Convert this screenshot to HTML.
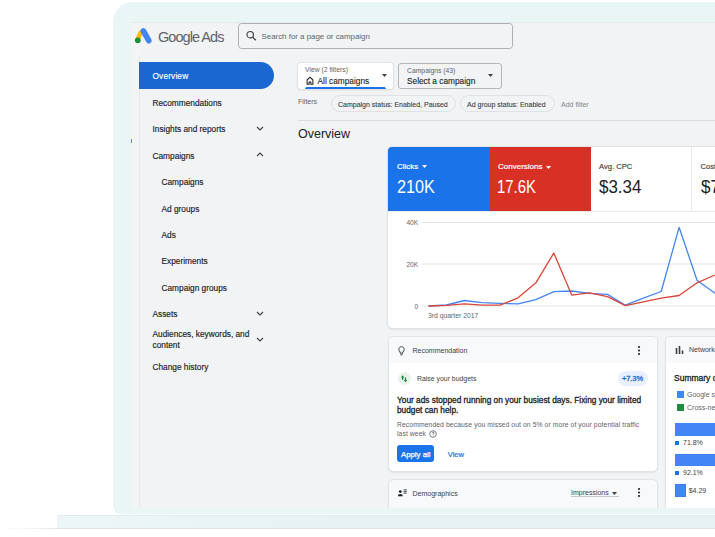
<!DOCTYPE html>
<html><head><meta charset="utf-8">
<style>
*{margin:0;padding:0;box-sizing:border-box}
html,body{width:715px;height:537px;overflow:hidden;background:#fff;font-family:"Liberation Sans",sans-serif;color:#202124}
.a{position:absolute;white-space:nowrap}
#frame{position:absolute;left:112.5px;top:2px;width:640px;height:512px;background:#eaf5f6;border-radius:20px 0 0 8px}
#base{position:absolute;left:57px;top:514.5px;width:700px;height:14.5px;background:linear-gradient(90deg,#ecf6f7,#e6f2f3 40%);border-bottom:1.5px solid #dfe3e8;border-top:1px solid #e0ecee;border-radius:1px 0 0 1px}
#shadow{position:absolute;left:0;top:527.5px;width:60px;height:1.5px;background:linear-gradient(90deg,rgba(223,227,232,0),#e3e6ea)}
#screen{position:absolute;left:131px;top:22px;width:600px;height:486px;background:#f1f3f4;overflow:hidden}
.nav{position:absolute;margin-top:0.5px;left:21.5px;font-size:8.3px;color:#202124;line-height:10px;-webkit-text-stroke:0.15px currentColor}
.chev{position:absolute;width:8px;height:5px}
.card{position:absolute;background:#fff;border-radius:4.5px;box-shadow:0 0 0 1px #e1e3e6,0 1px 2px rgba(60,64,67,.24)}
</style></head><body>
<div id="frame"></div>
<div id="base"></div><div id="shadow"></div>
<div id="screen">
  <div style="position:absolute;left:0;top:0;width:8px;height:486px;background:#f3f4f6"></div>
  <div style="position:absolute;left:0;top:0;width:600px;height:1px;background:#e6e8ea"></div>
  <div style="position:absolute;left:0;top:117px;width:1px;height:3.5px;background:#5b8ee8"></div>
  <div style="position:absolute;left:7.5px;top:34px;width:1.5px;height:452px;background:#e7e8eb"></div>
  <!-- logo -->
  <svg class="a" style="left:0;top:0" width="30" height="30" viewBox="0 0 30 30">
    <path d="M9.9 10.6 L6.8 16.8" stroke="#fbbc04" stroke-width="4.6" stroke-linecap="round"/>
    <path d="M12.4 9 L17.8 18.7" stroke="#4285f4" stroke-width="5.7" stroke-linecap="round"/>
    <circle cx="6.8" cy="18.3" r="2.9" fill="#1e8e3e"/>
  </svg>
  <div class="a" style="left:27px;top:6.5px;font-size:14.5px;letter-spacing:-0.95px;color:#5f6368">Google Ads</div>
  <!-- search -->
  <div class="a" style="left:107px;top:0.8px;width:274.5px;height:26.4px;border:1.3px solid #acafb3;border-radius:3.5px;background:#f1f3f4"></div>
  <svg class="a" style="left:115px;top:8px" width="11" height="11" viewBox="0 0 11 11"><circle cx="4.2" cy="4.7" r="3.2" fill="none" stroke="#3c4043" stroke-width="1.15"/><path d="M6.6 7.1 L9.8 10.3" stroke="#3c4043" stroke-width="1.3"/></svg>
  <div class="a" style="left:130.5px;top:9.5px;font-size:7.9px;color:#5f6368">Search for a page or campaign</div>

  <!-- sidebar -->
  <div class="a" style="left:8px;top:40px;width:135px;height:27px;background:#1a67d2;border-radius:0 14px 14px 0"></div>
  <div class="nav" style="top:48.2px;color:#fff;letter-spacing:0.15px">Overview</div>
  <div class="nav" style="top:75px">Recommendations</div>
  <div class="nav" style="top:101px">Insights and reports</div>
  <div class="nav" style="top:128px">Campaigns</div>
  <div class="nav" style="top:154px;left:30.5px">Campaigns</div>
  <div class="nav" style="top:181px;left:30.5px">Ad groups</div>
  <div class="nav" style="top:207px;left:30.5px">Ads</div>
  <div class="nav" style="top:233px;left:30.5px">Experiments</div>
  <div class="nav" style="top:260px;left:30.5px">Campaign groups</div>
  <div class="nav" style="top:286.5px">Assets</div>
  <div class="nav" style="top:306.6px;line-height:10.8px">Audiences, keywords, and<br>content</div>
  <div class="nav" style="top:339px">Change history</div>
  <svg class="chev" style="left:125.4px;top:104px" viewBox="0 0 8 5"><path d="M1 1 L4 4 L7 1" fill="none" stroke="#3c4043" stroke-width="1.1"/></svg>
  <svg class="chev" style="left:125.4px;top:130px" viewBox="0 0 8 5"><path d="M1 4 L4 1 L7 4" fill="none" stroke="#3c4043" stroke-width="1.1"/></svg>
  <svg class="chev" style="left:125.4px;top:288.7px" viewBox="0 0 8 5"><path d="M1 1 L4 4 L7 1" fill="none" stroke="#3c4043" stroke-width="1.1"/></svg>
  <svg class="chev" style="left:125.4px;top:315px" viewBox="0 0 8 5"><path d="M1 1 L4 4 L7 1" fill="none" stroke="#3c4043" stroke-width="1.1"/></svg>

  <!-- view dropdowns -->
  <div class="a" style="left:167px;top:41px;width:95px;height:26px;background:#fff;border-radius:3px;box-shadow:0 0 0 1px #e0e2e5,0 1px 2px rgba(60,64,67,.2)"></div>
  <div class="a" style="left:174px;top:44px;font-size:6.8px;color:#5f6368">View (2 filters)</div>
  <svg class="a" style="left:175px;top:53.5px" width="9" height="9" viewBox="0 0 9 9"><path d="M1.1 4 L4 1.2 L6.9 4 V8.2 H4.9 V6 H3.1 V8.2 H1.1 Z" fill="none" stroke="#202124" stroke-width="1.05" stroke-linejoin="round"/></svg>
  <div class="a" style="left:186.5px;top:53.5px;font-size:8.3px;color:#202124;-webkit-text-stroke:0.1px #202124">All campaigns</div>
  <svg class="a" style="left:251px;top:52px" width="5" height="3" viewBox="0 0 5 3"><path d="M0 0 H5 L2.5 3 Z" fill="#3c4043"/></svg>
  <div class="a" style="left:174px;top:64.5px;width:81px;height:2.5px;background:#1a73e8;border-radius:2px 2px 0 0"></div>

  <div class="a" style="left:267px;top:40.5px;width:104px;height:26.5px;border:1px solid #b3b7bc;border-radius:3px"></div>
  <div class="a" style="left:276px;top:45px;font-size:6.8px;color:#5f6368">Campaigns (43)</div>
  <div class="a" style="left:276px;top:53.5px;font-size:8.3px;color:#202124;-webkit-text-stroke:0.1px #202124">Select a campaign</div>
  <svg class="a" style="left:357px;top:52px" width="5" height="3" viewBox="0 0 5 3"><path d="M0 0 H5 L2.5 3 Z" fill="#3c4043"/></svg>

  <div class="a" style="left:167px;top:76px;font-size:7px;color:#5f6368">Filters</div>
  <div class="a" style="left:200px;top:73.4px;width:124.5px;height:16.8px;border:1.3px solid #dfe1e4;border-radius:9px"></div>
  <div class="a" style="left:207px;top:79px;font-size:7px;color:#3c4043;-webkit-text-stroke:0.1px #3c4043">Campaign status: Enabled, Paused</div>
  <div class="a" style="left:329px;top:73.4px;width:94.5px;height:16.8px;border:1.3px solid #dfe1e4;border-radius:9px"></div>
  <div class="a" style="left:336px;top:79px;font-size:7px;color:#3c4043;-webkit-text-stroke:0.1px #3c4043">Ad group status: Enabled</div>
  <div class="a" style="left:430px;top:79px;font-size:7px;color:#80868b">Add filter</div>
  <div class="a" style="left:167px;top:97.5px;width:450px;height:1px;background:#dadce0"></div>

  <div class="a" style="left:167px;top:105px;font-size:12.5px;color:#202124">Overview</div>

  <!-- metrics card -->
  <div class="card" style="left:257px;top:125px;width:400px;height:181px"></div>
  <div class="a" style="left:257px;top:125px;width:102px;height:64px;background:#1a73e8;border-radius:4px 0 0 0"></div>
  <div class="a" style="left:359px;top:125px;width:101px;height:64px;background:#d93025"></div>
  <div class="a" style="left:560px;top:125px;width:1px;height:64px;background:#e8eaed"></div>
  <div class="a" style="left:257px;top:189px;width:400px;height:1px;background:#e8eaed"></div>
  <div class="a" style="left:266px;top:140.3px;font-size:8px;color:#fff;-webkit-text-stroke:0.2px #fff">Clicks</div>
  <svg class="a" style="left:291.3px;top:143px" width="5" height="3" viewBox="0 0 5 3"><path d="M0 0 H5 L2.5 3 Z" fill="#fff"/></svg>
  <div class="a" style="left:265.5px;top:155.2px;font-size:18px;color:#fff;transform:scaleX(0.9);transform-origin:0 0">210K</div>
  <div class="a" style="left:367px;top:140.3px;font-size:8px;color:#fff;-webkit-text-stroke:0.2px #fff">Conversions</div>
  <svg class="a" style="left:415.2px;top:143.5px" width="5" height="3" viewBox="0 0 5 3"><path d="M0 0 H5 L2.5 3 Z" fill="#fff"/></svg>
  <div class="a" style="left:366.3px;top:155.2px;font-size:18px;color:#fff;transform:scaleX(0.83);transform-origin:0 0">17.6K</div>
  <div class="a" style="left:468px;top:139.8px;font-size:7.6px;color:#3c4043;-webkit-text-stroke:0.15px #3c4043">Avg. CPC</div>
  <div class="a" style="left:467.7px;top:155.2px;font-size:18px;color:#202124;transform:scaleX(0.94);transform-origin:0 0">$3.34</div>
  <div class="a" style="left:569.6px;top:139.7px;font-size:7.6px;color:#3c4043;-webkit-text-stroke:0.15px #3c4043">Cost</div>
  <div class="a" style="left:569.7px;top:155.2px;font-size:18px;color:#202124;transform:scaleX(0.94);transform-origin:0 0">$7</div>

  <!-- chart -->
  <svg class="a" style="left:0;top:0" width="600" height="486">
    <g stroke="#e3e4e6" stroke-width="1">
      <line x1="291" y1="200.5" x2="600" y2="200.5"/>
      <line x1="291" y1="242" x2="600" y2="242"/>
      <line x1="291" y1="284" x2="600" y2="284"/>
    </g>
    <polyline points="297.5,284.0 315.4,283.0 333.3,278.5 351.2,280.7 369.1,281.4 387.0,281.8 404.9,277.6 422.8,269.7 440.7,269.0 458.6,271.3 476.5,272.4 494.4,283.2 512.3,276.2 530.2,269.5 548.1,205.3 566.0,258.3 583.9,271.3" fill="none" stroke="#4285f4" stroke-width="1.3" stroke-linejoin="round"/>
    <polyline points="297.5,284.0 315.4,283.4 333.3,281.8 351.2,283.2 369.1,283.2 387.0,275.8 404.9,260.8 422.8,231.0 440.7,273.1 458.6,270.9 476.5,274.7 494.4,283.6 512.3,279.8 530.2,276.2 548.1,273.5 566.0,260.8 583.9,253.0" fill="none" stroke="#db4437" stroke-width="1.3" stroke-linejoin="round"/>
    <g font-family="Liberation Sans" font-size="6.5" fill="#5f6368" text-anchor="end">
      <text x="287" y="202.8">40K</text>
      <text x="287" y="245.2">20K</text>
      <text x="287" y="286.5">0</text>
    </g>
    <text x="297" y="295.6" font-family="Liberation Sans" font-size="6.8" fill="#5f6368">3rd quarter 2017</text>
  </svg>

  <!-- recommendation card -->
  <div class="card" style="left:258px;top:315px;width:268px;height:134px;overflow:hidden">
    <div style="position:absolute;left:0;top:0;width:268px;height:26px;background:#f8f9fa"></div>
  </div>
  <svg class="a" style="left:267.2px;top:323.7px" width="7" height="10" viewBox="0 0 7 10"><path d="M3.5 0.7 C1.9 0.7 0.8 1.9 0.8 3.3 C0.8 4.6 1.6 5.2 2.2 6.1 V7.2 H4.8 V6.1 C5.4 5.2 6.2 4.6 6.2 3.3 C6.2 1.9 5.1 0.7 3.5 0.7 Z" fill="none" stroke="#3c4043" stroke-width="1"/><path d="M2.4 8.8 H4.6" stroke="#3c4043" stroke-width="1"/></svg>
  <div class="a" style="left:281.5px;top:324.6px;font-size:7px;color:#3c4043">Recommendation</div>
  <svg class="a" style="left:506px;top:322.5px" width="4" height="12" viewBox="0 0 4 12"><circle cx="2" cy="2" r="1.05" fill="#202124"/><circle cx="2" cy="5.5" r="1.05" fill="#202124"/><circle cx="2" cy="9" r="1.05" fill="#202124"/></svg>
  <div class="a" style="left:266.5px;top:350px;width:13.2px;height:13.2px;border-radius:50%;background:#e6f4ea"></div>
  <svg class="a" style="left:266.5px;top:350px" width="13" height="13" viewBox="0 0 13 13"><path d="M4.6 5 V7.8 M7.5 5.5 V8.2" stroke="#188038" stroke-width="1.3"/><path d="M2.9 5.6 L4.6 3.2 L6.3 5.6 Z M5.8 7.9 L7.5 10.3 L9.2 7.9 Z" fill="#188038"/></svg>
  <div class="a" style="left:286px;top:353px;font-size:6.9px;color:#3c4043">Raise your budgets</div>
  <div class="a" style="left:487px;top:349px;width:30px;height:14.6px;border-radius:8px;background:#e8f0fe"></div>
  <div class="a" style="left:491px;top:352.3px;font-size:7.5px;letter-spacing:-0.1px;color:#1967d2;-webkit-text-stroke:0.3px #1967d2">+7.3%</div>
  <div class="a" style="left:266px;top:372.8px;font-size:8.3px;line-height:10.6px;color:#202124;-webkit-text-stroke:0.3px #202124">Your ads stopped running on your busiest days. Fixing your limited<br>budget can help.</div>
  <div class="a" style="left:266px;top:398.1px;font-size:6.8px;letter-spacing:0.08px;line-height:9.3px;color:#5f6368">Recommended because you missed out on 5% or more of your potential traffic<br>last week</div>
  <svg class="a" style="left:298px;top:408px" width="8" height="8" viewBox="0 0 8 8"><circle cx="4" cy="4" r="3.3" fill="none" stroke="#5f6368" stroke-width=".8"/><path d="M2.9 3.1 C2.9 2.4 3.4 2 4 2 C4.6 2 5.1 2.4 5.1 3 C5.1 3.7 4 3.8 4 4.8" fill="none" stroke="#5f6368" stroke-width=".8"/><circle cx="4" cy="5.9" r=".45" fill="#5f6368"/></svg>
  <div class="a" style="left:266.4px;top:422.5px;width:36.6px;height:17.4px;border-radius:3px;background:#1a73e8"></div>
  <div class="a" style="left:270px;top:427.8px;font-size:7.8px;color:#fff;-webkit-text-stroke:0.25px #fff">Apply all</div>
  <div class="a" style="left:316.8px;top:428px;font-size:7.5px;color:#1a73e8;-webkit-text-stroke:0.2px #1a73e8">View</div>

  <!-- demographics card -->
  <div class="card" style="left:258px;top:457.5px;width:268px;height:60px;background:#f8f9fa"></div>
  <svg class="a" style="left:266px;top:466px" width="11" height="9" viewBox="0 0 11 9"><circle cx="3.3" cy="3.6" r="1.4" fill="#202124"/><path d="M0.9 8.3 C0.9 6.7 2 5.9 3.3 5.9 C4.6 5.9 5.8 6.7 5.8 8.3 Z" fill="#202124"/><path d="M6.6 1.9 H9.7 M6.6 3.6 H9.7 M6.6 5.3 H9.7" stroke="#5f6368" stroke-width="1.1"/></svg>
  <div class="a" style="left:281.5px;top:467.5px;font-size:7px;color:#3c4043">Demographics</div>
  <div class="a" style="left:440px;top:467px;font-size:7px;color:#3c4043">Impressions</div>
  <svg class="a" style="left:481px;top:470px" width="5" height="3" viewBox="0 0 5 3"><path d="M0 0 H5 L2.5 3 Z" fill="#3c4043"/></svg>
  <div class="a" style="left:440px;top:474px;width:48px;height:1px;background:#c4c7cb"></div>
  <svg class="a" style="left:506px;top:465px" width="4" height="12" viewBox="0 0 4 12"><circle cx="2" cy="2" r="1.05" fill="#202124"/><circle cx="2" cy="5.5" r="1.05" fill="#202124"/><circle cx="2" cy="9" r="1.05" fill="#202124"/></svg>

  <!-- network card -->
  <div class="card" style="left:534.8px;top:315px;width:120px;height:200px;overflow:hidden">
    <div style="position:absolute;left:0;top:0;width:120px;height:26px;background:#f8f9fa"></div>
  </div>
  <svg class="a" style="left:544px;top:324px" width="9" height="8" viewBox="0 0 9 8"><path d="M1.5 8 V2 M4.5 8 V0 M7.5 8 V4.5" stroke="#3c4043" stroke-width="1.6"/></svg>
  <div class="a" style="left:558px;top:324px;font-size:7px;color:#3c4043">Network</div>
  <div class="a" style="left:543px;top:351px;font-size:8.5px;color:#202124;-webkit-text-stroke:0.3px #202124">Summary of</div>
  <div class="a" style="left:546px;top:368.5px;width:7px;height:7px;background:#4285f4"></div>
  <div class="a" style="left:556px;top:368.7px;font-size:7px;color:#5f6368">Google search</div>
  <div class="a" style="left:546px;top:381.5px;width:7px;height:7px;background:#1e8e3e"></div>
  <div class="a" style="left:556px;top:381.7px;font-size:7px;color:#5f6368">Cross-network</div>
  <div class="a" style="left:543.5px;top:400.5px;width:80px;height:13px;background:#4285f4"></div>
  <div class="a" style="left:543.5px;top:418.6px;width:4px;height:4px;background:#1a73e8"></div>
  <div class="a" style="left:552px;top:416.5px;font-size:7px;color:#3c4043">71.8%</div>
  <div class="a" style="left:543.5px;top:431.9px;width:80px;height:12.5px;background:#4285f4"></div>
  <div class="a" style="left:543.5px;top:448.8px;width:4px;height:4px;background:#1a73e8"></div>
  <div class="a" style="left:552px;top:447px;font-size:7px;color:#3c4043">92.1%</div>
  <div class="a" style="left:543.5px;top:462.2px;width:11.3px;height:12.6px;background:#4285f4;box-shadow:inset 0 0 0 .6px #3b78e7"></div>
  <div class="a" style="left:557.7px;top:465px;font-size:7px;color:#3c4043">$4.29</div>
</div>
</body></html>
